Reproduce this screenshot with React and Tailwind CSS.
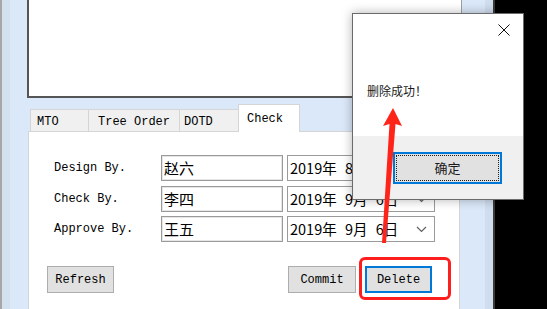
const mono = { fontFamily: '"Liberation Mono", "Noto Sans CJK SC", monospace' }

function Chevron() {
  return (
    <svg width="11" height="7" viewBox="0 0 11 7" className="shrink-0">
      <path d="M1 1 L5.5 5.5 L10 1" fill="none" stroke="#606060" strokeWidth="1.2" />
    </svg>
  )
}

function Row({ label, name, date, className }) {
  return (
    <div className={`flex h-[26px] items-center ${className || ''}`}>
      <div className="w-[107px] text-[12px] text-black" style={mono}>{label}</div>
      <div className="flex h-[26px] w-[122px] items-center border border-[#9a9a9a] px-[2px] text-[15px] text-black ring-1 ring-inset ring-[#e6e6e6]">
        {name}
      </div>
      <div className="ml-[4px] flex h-[26px] w-[148px] items-center justify-between border border-[#9a9a9a] pl-[2px] pr-[7px] text-[14.5px] text-black">
        <span className="[word-spacing:5px]">{date}</span>
        <Chevron />
      </div>
    </div>
  )
}

function Btn({ children, focused, className }) {
  return (
    <div
      className={`flex h-[27px] items-center justify-center bg-[#e1e1e1] text-[12px] text-black ${
        focused ? 'border-2 border-[#0078d7]' : 'border border-[#adadad]'
      } ${className || ''}`}
      style={mono}
    >
      {children}
    </div>
  )
}

export default function App() {
  return (
    <div
      className="relative flex h-[309px] w-[547px] overflow-hidden bg-black"
      style={{ fontFamily: '"Noto Sans CJK SC", "Noto Sans", sans-serif' }}
    >
      <div className="flex h-full w-[495px] shrink-0">
        <div className="w-[2px] bg-[#a6a6a6]" />
        <div className="w-[8px] bg-[#d3e0f0]" />
        <div className="w-[17px] bg-[#dbe8f9]" />

        <div className="flex w-[435px] flex-col bg-[#dbe8f9]">
          <div className="h-[98px] border-b-2 border-l-2 border-r border-b-[#555] border-l-[#555] border-r-[#a0a0a0] bg-white" />

          <div className="ml-[3px] mt-[6px] flex h-[27px] items-end">
            <div className="flex h-[22px] w-[58px] items-center border-l border-t border-[#d5d5d5] bg-[#f0f0f0] pl-[6px] pt-[3px] text-[12px]" style={mono}>MTO</div>
            <div className="flex h-[22px] w-[91px] items-center border-l border-t border-[#d5d5d5] bg-[#f0f0f0] pl-[9px] pt-[3px] text-[12px]" style={mono}>Tree Order</div>
            <div className="flex h-[22px] w-[59px] items-center border-l border-t border-[#d5d5d5] bg-[#f0f0f0] pl-[4px] pt-[3px] text-[12px]" style={mono}>DOTD</div>
            <div className="relative z-10 -mb-px flex h-[28px] w-[62px] items-start border-x border-t border-[#d5d5d5] bg-white pl-[8px] pt-[5px] text-[12px]" style={mono}>Check</div>
          </div>

          <div className="ml-[1px] flex w-[432px] flex-1 flex-col border-x border-t border-[#d5d5d5] bg-white pl-[25px] pt-[23px]">
            <Row label="Design By." name="赵六" date="2019年 8月 6日" />
            <Row label="Check By." name="李四" date="2019年 9月 6日" className="mt-[5px]" />
            <Row label="Approve By." name="王五" date="2019年 9月 6日" className="mt-[4px]" />

            <div className="mt-[24px] flex">
              <Btn className="ml-[-7px] w-[67px]">Refresh</Btn>
              <Btn className="ml-[174px] w-[68px]">Commit</Btn>
              <Btn focused className="ml-[9px] w-[67px]">Delete</Btn>
            </div>
          </div>
        </div>

        <div className="w-[23px] bg-[#dbe8f9]" />
        <div className="w-[8px] bg-[#d0ddee]" />
        <div className="w-[2px] bg-[#3a3a3a]" />
      </div>

      {/* annotation box */}
      <div className="absolute left-[359px] top-[257px] h-[43px] w-[92px] rounded-[6px] border-[3px] border-[#ff1e1e]" />

      {/* message box */}
      <div className="absolute left-[352px] top-[13px] flex h-[187px] w-[172px] flex-col border border-[#6b6b6b] bg-white shadow-[0_0_10px_rgba(0,0,0,0.3)]">
        <div className="flex h-[122px] flex-col">
          <div className="flex h-[32px] justify-end pr-[13px] pt-[10px]">
            <svg width="12" height="12" viewBox="0 0 12 12">
              <path d="M0.5 0.5 L11.5 11.5 M11.5 0.5 L0.5 11.5" stroke="#111" strokeWidth="1" />
            </svg>
          </div>
          <div className="mt-[36px] pl-[14px] text-[12px] text-[#1a1a1a]">删除成功！</div>
        </div>
        <div className="flex flex-1 justify-end bg-[#f0f0f0] pr-[21px] pt-[16px]">
          <div className="flex h-[32px] w-[109px] items-center justify-center border-2 border-[#0078d7] bg-[#e1e1e1] p-[1px]">
            <div className="flex h-full w-full items-center justify-center border border-dotted border-[#222] text-[13px] text-[#1a1a1a]">
              确定
            </div>
          </div>
        </div>
      </div>

      {/* red arrow */}
      <svg className="absolute left-0 top-0" width="547" height="309" viewBox="0 0 547 309">
        <polygon
          points="393,108 402,126 395.5,124 386,243 382,243 389.5,124 383,126"
          fill="#ff2419"
        />
      </svg>
    </div>
  )
}
